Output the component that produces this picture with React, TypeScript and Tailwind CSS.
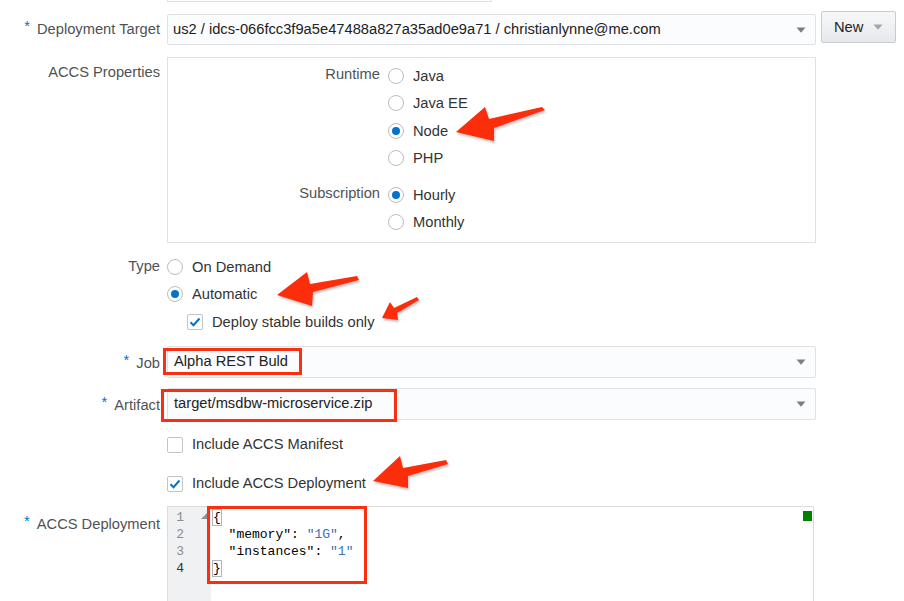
import React from "react";

function Req() {
  return <span className="text-[#0572ce] relative -top-[3px] mr-[7px]">*</span>;
}

function Caret({ color = "#7b7e82" }: { color?: string }) {
  return (
    <svg width="10" height="6" viewBox="0 0 10 6" className="shrink-0">
      <path d="M0.5 0.5h9L5 5.8z" fill={color} />
    </svg>
  );
}

function Radio({ checked }: { checked?: boolean }) {
  return (
    <span className="w-[16px] h-[16px] rounded-full border border-[#b8bdc2] bg-white flex items-center justify-center shrink-0">
      {checked && <span className="w-[8px] h-[8px] rounded-full bg-[#0572ce]" />}
    </span>
  );
}

function Checkbox({ checked }: { checked?: boolean }) {
  return (
    <span className="w-[16px] h-[16px] rounded-[2px] border border-[#c0c5ca] bg-white flex items-center justify-center shrink-0">
      {checked && (
        <svg width="12" height="10" viewBox="0 0 12 10">
          <path d="M1.5 5.2L4.5 8.2L10.5 1.5" fill="none" stroke="#0572ce" strokeWidth="2" />
        </svg>
      )}
    </span>
  );
}

function Opt({ label, checked }: { label: string; checked?: boolean }) {
  return (
    <div className="flex items-center h-[27.5px]">
      <Radio checked={checked} />
      <span className="ml-[9px] text-[#333]">{label}</span>
    </div>
  );
}

function Select({ value }: { value: string }) {
  return (
    <div className="w-[649px] h-[32px] border border-[#dfe2e5] bg-[#fbfcfd] rounded-[2px] flex items-center pl-[6px] pr-[9px]">
      <span className="flex-1 text-[#222]">{value}</span>
      <Caret />
    </div>
  );
}

export default function App() {
  return (
    <div className="relative w-[904px] h-[601px] overflow-hidden bg-white text-[14.7px] font-['Liberation_Sans',Arial,sans-serif]">
      <div className="ml-[167px] w-[325px] h-[2px] bg-[#fbfcfd] border-b border-x border-[#dfe1e3]" />

      {/* Deployment target */}
      <div className="flex items-start mt-[9px]">
        <div className="w-[160px] text-right pt-[8px] leading-[20px] text-[#4f5254] whitespace-nowrap">
          <Req />Deployment Target
        </div>
        <div className="ml-[7px] mt-[3px]">
          <div className="w-[649px] h-[31px] border border-[#dfe2e5] bg-[#fbfcfd] rounded-[2px] flex items-center pl-[5px] pr-[9px]">
            <span className="flex-1 text-[#222] whitespace-nowrap">us2 / idcs-066fcc3f9a5e47488a827a35ad0e9a71 / christianlynne@me.com</span>
            <Caret />
          </div>
        </div>
        <div className="ml-[5px] w-[75px] h-[32px] border border-[#c4ccd4] rounded-[2px] bg-gradient-to-b from-[#f7f8f9] to-[#e6e9ec] flex items-center pl-[12px]">
          <span className="text-[#222]">New</span>
          <span className="ml-[10px]"><Caret color="#a3a6a9" /></span>
        </div>
      </div>

      {/* ACCS Properties */}
      <div className="flex items-start mt-[12px]">
        <div className="w-[160px] text-right pt-[5px] leading-[20px] text-[#4f5254] whitespace-nowrap">ACCS Properties</div>
        <div className="ml-[7px] w-[649px] h-[186px] border border-[#dfe1e3] pt-[4px]">
          <div className="flex items-start">
            <div className="w-[212px] text-right leading-[24px] text-[#4f5254]">Runtime</div>
            <div className="ml-[8px]">
              <Opt label="Java" />
              <Opt label="Java EE" />
              <Opt label="Node" checked />
              <Opt label="PHP" />
            </div>
          </div>
          <div className="flex items-start mt-[9px]">
            <div className="w-[212px] text-right leading-[24px] text-[#4f5254]">Subscription</div>
            <div className="ml-[8px]">
              <Opt label="Hourly" checked />
              <Opt label="Monthly" />
            </div>
          </div>
        </div>
      </div>

      {/* Type */}
      <div className="flex items-start mt-[10px]">
        <div className="w-[160px] text-right leading-[27.5px] text-[#4f5254]">Type</div>
        <div className="ml-[7px]">
          <Opt label="On Demand" />
          <Opt label="Automatic" checked />
          <div className="flex items-center h-[27.5px] ml-[20px]">
            <Checkbox checked />
            <span className="ml-[9px] text-[#333]">Deploy stable builds only</span>
          </div>
        </div>
      </div>

      {/* Job */}
      <div className="flex items-start mt-[10px]">
        <div className="w-[160px] text-right leading-[32px] relative top-[1px] text-[#4f5254]"><Req />Job</div>
        <div className="ml-[7px]"><Select value="Alpha REST Buld" /></div>
      </div>

      {/* Artifact */}
      <div className="flex items-start mt-[10px]">
        <div className="w-[160px] text-right leading-[32px] relative top-[1px] text-[#4f5254]"><Req />Artifact</div>
        <div className="ml-[7px]"><Select value="target/msdbw-microservice.zip" /></div>
      </div>

      <div className="flex items-center h-[28px] mt-[11px] ml-[167px]">
        <Checkbox />
        <span className="ml-[9px] text-[#333]">Include ACCS Manifest</span>
      </div>
      <div className="flex items-center h-[28px] mt-[11px] ml-[167px]">
        <Checkbox checked />
        <span className="ml-[9px] text-[#333]">Include ACCS Deployment</span>
      </div>

      {/* ACCS Deployment editor */}
      <div className="flex items-start mt-[8px]">
        <div className="w-[160px] text-right pt-[8px] leading-[20px] text-[#4f5254] whitespace-nowrap"><Req />ACCS Deployment</div>
        <div className="ml-[7px] relative w-[647px] h-[120px] border border-[#d9dcdf] flex font-['Liberation_Mono',monospace] text-[13px] leading-[17px]">
          <div className="relative w-[43px] h-full bg-[#f0f1f3] pt-[2px] pr-[27px] text-right text-[#8b8e91]">
            <div>1</div>
            <div>2</div>
            <div>3</div>
            <div className="text-[#333]">4</div>
            <svg width="7" height="7" viewBox="0 0 7 7" className="absolute left-[33px] top-[5px]">
              <path d="M7 0V7H0z" fill="#8f9296" />
            </svg>
          </div>
          <div className="pl-[2px] pt-[2px] text-[#000] whitespace-pre">
            <div><span className="ring-1 ring-[#b5b5b5]">{"{"}</span></div>
            <div>{'  "memory": '}<span className="text-[#3a70b8]">"1G"</span>,</div>
            <div>{'  "instances": '}<span className="text-[#3a70b8]">"1"</span></div>
            <div><span className="ring-1 ring-[#b5b5b5]">{"}"}</span></div>
          </div>
          <div className="absolute right-[1px] top-[4px] w-[9px] h-[10px] bg-[#008000]" />
        </div>
      </div>

      {/* Annotations */}
      <div className="absolute left-[163px] top-[348px] w-[139px] h-[27px] border-[3px] border-[#fa2e10]" />
      <div className="absolute left-[161px] top-[389px] w-[236px] h-[33px] border-[3px] border-[#fa2e10]" />
      <div className="absolute left-[207px] top-[506px] w-[160px] h-[78px] border-[3px] border-[#fa2e10]" />

      <svg width="904" height="601" viewBox="0 0 904 601" className="absolute left-0 top-0 pointer-events-none drop-shadow-[1px_2px_1px_rgba(0,0,0,0.25)]">
        <g fill="#fc2d0b">
          <polygon points="456,132 485,107 489,119 542,107 545,110 494,128 494,141" />
          <polygon points="277,295 307,272 310,284 357,276 359,280 313,292 312,306" />
          <polygon points="382,318 390,302 394,308 417,297 419,300 397,313 398,320" />
          <polygon points="373,481 400,456 403,468 446,460 448,464 408,476 408,488" />
        </g>
      </svg>
    </div>
  );
}
